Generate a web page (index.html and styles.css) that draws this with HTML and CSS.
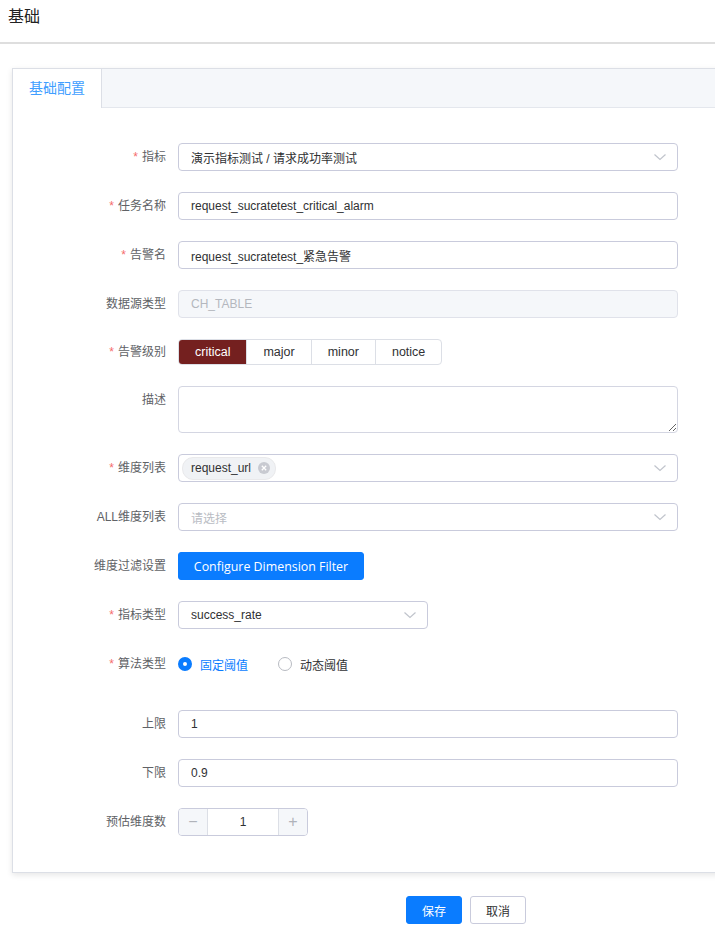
FILE: index.html
```html
<!DOCTYPE html>
<html lang="zh-CN">
  <head>
    <meta charset="UTF-8" />
    <meta name="viewport" content="width=device-width, initial-scale=1.0" />
    <title>基础</title>
    <link rel="stylesheet" href="styles.css">
  </head>

  <body>
    <div class="page-header">
      <h1>基础</h1>
    </div>

    <div class="content">
      <div class="tabs-card">
        <div class="tabs-header">
          <div class="tab active">基础配置</div>
        </div>

        <div class="tabs-body">
          <div class="form-item">
            <label class="form-label required">指标</label>
            <div class="select">
              <span class="select-value">演示指标测试 / 请求成功率测试</span>
              <svg class="arrow" width="14" height="14" viewBox="0 0 14 14"><path d="M1.5 4.5 L7 9.5 L12.5 4.5" fill="none" stroke="#c0c4cc" stroke-width="1.2"/></svg>
            </div>
          </div>

          <div class="form-item">
            <label class="form-label required">任务名称</label>
            <input class="input" type="text" value="request_sucratetest_critical_alarm">
          </div>

          <div class="form-item">
            <label class="form-label required">告警名</label>
            <input class="input" type="text" value="request_sucratetest_紧急告警">
          </div>

          <div class="form-item">
            <label class="form-label">数据源类型</label>
            <input class="input" type="text" value="CH_TABLE" disabled>
          </div>

          <div class="form-item form-item-short">
            <label class="form-label required">告警级别</label>
            <div class="btn-group">
              <span class="level critical">critical</span>
              <span class="level">major</span>
              <span class="level">minor</span>
              <span class="level">notice</span>
            </div>
          </div>

          <div class="form-item form-item-top">
            <label class="form-label">描述</label>
            <textarea class="textarea"></textarea>
          </div>

          <div class="form-item">
            <label class="form-label required">维度列表</label>
            <div class="select">
              <span class="tag">request_url
                <svg class="tag-close" width="12" height="12" viewBox="0 0 12 12"><circle cx="6" cy="6" r="6" fill="#c8cad1"/><path d="M3.8 3.8 L8.2 8.2 M8.2 3.8 L3.8 8.2" stroke="#fff" stroke-width="1.3"/></svg>
              </span>
              <svg class="arrow" width="14" height="14" viewBox="0 0 14 14"><path d="M1.5 4.5 L7 9.5 L12.5 4.5" fill="none" stroke="#c0c4cc" stroke-width="1.2"/></svg>
            </div>
          </div>

          <div class="form-item">
            <label class="form-label">ALL维度列表</label>
            <div class="select">
              <span class="placeholder">请选择</span>
              <svg class="arrow" width="14" height="14" viewBox="0 0 14 14"><path d="M1.5 4.5 L7 9.5 L12.5 4.5" fill="none" stroke="#c0c4cc" stroke-width="1.2"/></svg>
            </div>
          </div>

          <div class="form-item">
            <label class="form-label">维度过滤设置</label>
            <button class="btn btn-primary btn-filter" type="button">Configure Dimension Filter</button>
          </div>

          <div class="form-item">
            <label class="form-label required">指标类型</label>
            <div class="select select-short">
              <span class="select-value">success_rate</span>
              <svg class="arrow" width="14" height="14" viewBox="0 0 14 14"><path d="M1.5 4.5 L7 9.5 L12.5 4.5" fill="none" stroke="#c0c4cc" stroke-width="1.2"/></svg>
            </div>
          </div>

          <div class="form-item form-item-spaced">
            <label class="form-label required">算法类型</label>
            <div class="radio-group">
              <span class="radio checked"><span class="radio-dot"></span>固定阈值</span>
              <span class="radio"><span class="radio-dot"></span>动态阈值</span>
            </div>
          </div>

          <div class="form-item">
            <label class="form-label">上限</label>
            <input class="input" type="text" value="1">
          </div>

          <div class="form-item">
            <label class="form-label">下限</label>
            <input class="input" type="text" value="0.9">
          </div>

          <div class="form-item">
            <label class="form-label">预估维度数</label>
            <div class="number-input">
              <span class="step">&minus;</span>
              <span class="number-value">1</span>
              <span class="step">+</span>
            </div>
          </div>
        </div>
      </div>

      <div class="footer">
        <button class="btn btn-primary" type="button">保存</button>
        <button class="btn" type="button">取消</button>
      </div>
    </div>
  </body>
</html>
```

FILE: styles.css
```css
html {
  overflow-x: hidden;
}

body {
  font-family: "Liberation Sans", Arial, "Noto Sans CJK SC", sans-serif;
  font-size: 12px;
  margin: 0;
  color: #303133;
  background: #fff;
}

.page-header {
  height: 42px;
  border-bottom: 2px solid #dedede;
  padding-left: 8px;
}

.page-header h1 {
  margin: 0;
  font-size: 16px;
  font-weight: normal;
  line-height: 33px;
  color: #222;
}

.content {
  padding: 24px 0 0 12px;
}

.tabs-card {
  width: 740px;
  border: 1px solid #dcdfe6;
  background: #fff;
  box-shadow: 0 2px 6px rgba(0, 0, 0, 0.1);
}

.tabs-header {
  display: flex;
  height: 38px;
  background: #f5f7fa;
  border-bottom: 1px solid #e4e7ed;
}

.tab {
  padding: 0 16px;
  font-size: 14px;
  line-height: 38px;
  color: #606266;
}

.tab.active {
  background: #fff;
  color: #409eff;
  border-right: 1px solid #dcdfe6;
  height: 39px;
}

.tabs-body {
  padding: 35px 15px 15px;
}

.form-item {
  display: flex;
  align-items: center;
  margin-bottom: 21px;
}

.form-item-short .form-label {
  line-height: 26px;
}

.form-item-top {
  align-items: flex-start;
}

.form-item-spaced {
  margin-bottom: 32px;
}

.form-label {
  flex: 0 0 150px;
  box-sizing: border-box;
  padding-right: 12px;
  text-align: right;
  color: #606266;
  line-height: 28px;
}

.required::before {
  content: "*";
  color: #f56c6c;
  margin-right: 4px;
}

.input,
.select,
.textarea {
  box-sizing: border-box;
  width: 500px;
  height: 28px;
  border: 1px solid #c9cbdc;
  border-radius: 4px;
  background: #fff;
  font-family: inherit;
  font-size: 12px;
  color: #303133;
}

.input {
  padding: 0 12px;
  outline: none;
}

.input:disabled {
  background: #f5f7fa;
  border-color: #e0e2ea;
  color: #b4b7be;
}

.textarea {
  height: 47px;
  padding: 5px 12px;
  resize: vertical;
  border-color: #d4d6e2;
}

.select {
  display: flex;
  align-items: center;
  padding: 0 10px 0 12px;
}

.select-short {
  width: 250px;
}

.select-value {
  flex: 1;
}

.placeholder {
  flex: 1;
  color: #b9bcc3;
}

.arrow {
  margin-left: auto;
}

.tag {
  display: inline-flex;
  align-items: center;
  height: 21px;
  margin-left: -9px;
  padding: 0 5px 0 8px;
  background: #f0f2f5;
  border: 1px solid #e9e9eb;
  border-radius: 11px;
  color: #303133;
}

.tag-close {
  margin-left: 7px;
}

.btn-group {
  display: flex;
  border: 1px solid #dcdfe6;
  border-radius: 4px;
  overflow: hidden;
}

.level {
  height: 24px;
  line-height: 24px;
  padding: 0 16px;
  border-left: 1px solid #dcdfe6;
  font-size: 12.5px;
  color: #303133;
}

.level:first-child {
  border-left: none;
}

.level.critical {
  background: #74201f;
  color: #fff;
}

.btn {
  box-sizing: border-box;
  height: 28px;
  padding: 0 15px;
  border: 1px solid #c9cbdc;
  border-radius: 3px;
  background: #fff;
  font-family: inherit;
  font-size: 12px;
  color: #303133;
}

.btn-primary {
  background: #0a7cff;
  border-color: #0a7cff;
  color: #fff;
}

.btn-filter {
  width: 186px;
  padding: 0;
  font-family: "Open Sans", "Liberation Sans", sans-serif;
  font-size: 12.4px;
}

.radio-group {
  display: flex;
  align-items: center;
  height: 28px;
}

.radio {
  display: inline-flex;
  align-items: center;
  margin-right: 30px;
  color: #303133;
}

.radio.checked {
  color: #0a7cff;
}

.radio-dot {
  box-sizing: border-box;
  width: 14px;
  height: 14px;
  margin-right: 8px;
  border: 1px solid #b8bbc2;
  border-radius: 50%;
  background: #fff;
}

.radio.checked .radio-dot {
  border: 5px solid #0a7cff;
}

.number-input {
  display: flex;
  box-sizing: border-box;
  width: 130px;
  height: 28px;
  border: 1px solid #c9cbdc;
  border-radius: 4px;
  overflow: hidden;
}

.step {
  width: 28px;
  background: #f5f7fa;
  color: #b0b3ba;
  text-align: center;
  line-height: 26px;
  font-size: 16px;
}

.step:first-child {
  border-right: 1px solid #dcdfe6;
}

.step:last-child {
  border-left: 1px solid #dcdfe6;
}

.number-value {
  flex: 1;
  text-align: center;
  line-height: 26px;
}

.footer {
  display: flex;
  gap: 8px;
  padding: 23px 0 0 394px;
}

.footer .btn {
  width: 56px;
  padding: 0;
}
```
